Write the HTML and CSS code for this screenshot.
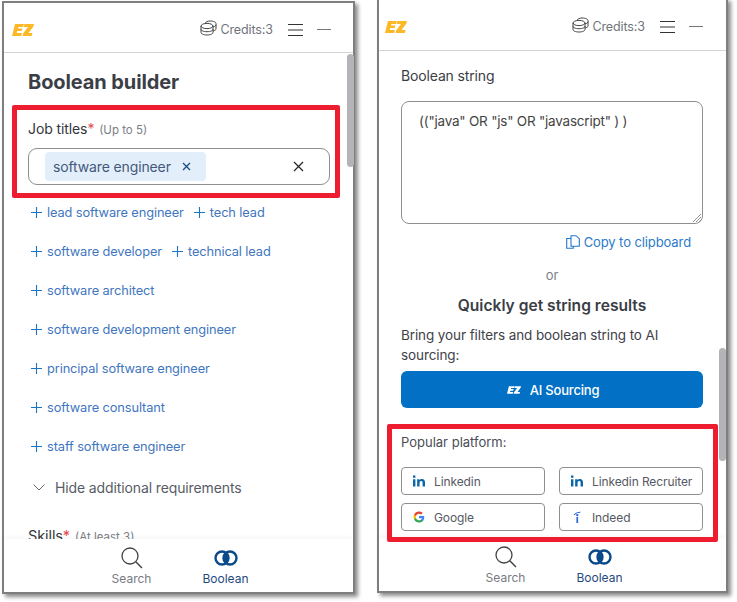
FILE: index.html
```html
<!DOCTYPE html>
<html lang="en">
<head>
<meta charset="utf-8">
<title>Boolean builder</title>
<link rel="stylesheet" href="styles.css">
</head>
<body>
<svg width="0" height="0" class="defs">
  <symbol id="coins" viewBox="0 0 17 16"><g fill="none" stroke="#444" stroke-width="1"><ellipse cx="7" cy="6" rx="6" ry="2.6"/><path d="M1 6v6.500C1 14 3.700 15 7 15s6-1 6-2.500V6M1 9.200C1 10.700 3.700 11.700 7 11.700s6-1 6-2.500"/><path d="M5 3.300C5.500 2 7.500 1 10 1c3.300 0 6 1 6 2.500V9c0 .8-1 1.500-3 2M13 6.800c2-.3 3-1.200 3-2"/></g></symbol>
  <symbol id="menu" viewBox="0 0 15 12"><path d="M0 .5h15M0 6h15M0 11.500h15" stroke="#333" stroke-width="1.100"/></symbol>
  <symbol id="plus" viewBox="0 0 11 11"><path d="M5.500 0v11M0 5.500h11" stroke="#1a75c4" stroke-width="1.100"/></symbol>
  <symbol id="lens" viewBox="0 0 22 22"><circle cx="9" cy="9" r="8" fill="none" stroke="#444" stroke-width="1.300"/><path d="M14.800 14.800L21 21" stroke="#444" stroke-width="1.500"/></symbol>
  <symbol id="venn" viewBox="0 0 24 16"><circle cx="8" cy="8" r="6.500" fill="none" stroke="#0b4a8a" stroke-width="2.400"/><circle cx="16" cy="8" r="6.500" fill="none" stroke="#0b4a8a" stroke-width="2.400"/><path d="M12 2.800a6.500 6.500 0 0 1 0 10.400a6.500 6.500 0 0 1 0-10.400z" fill="#0b4a8a"/></symbol>
  <symbol id="ez" viewBox="0 0 22 12"><path d="M3 0h9l-1 3H6.400L6 4.500h4.400l-.8 2.600H5.200L4.800 9H10l-1 3H0zM12.500 0H22l-.6 2.500L16.500 9H20.500l-.8 3H10.500l.6-2.500L16 3h-4.300z"/></symbol>
  <symbol id="in" viewBox="0 0 13 12"><path d="M0 4h2.600v8H0zM0 0h2.600v2.500H0zM4.500 4H7v1.200C7.500 4.400 8.500 3.800 9.700 3.800 12 3.800 13 5.200 13 7.500V12h-2.600V8c0-1.300-.4-2-1.500-2S7.100 6.800 7.100 8v4H4.500z" fill="#0a66a8"/></symbol>
</svg>

<section class="window window-left">
  <header class="topbar">
    <svg class="logo"><use href="#ez"/></svg>
    <div class="topbar-right">
      <svg class="coins"><use href="#coins"/></svg>
      <span class="credits">Credits:3</span>
      <svg class="menu"><use href="#menu"/></svg>
      <span class="minimize"></span>
    </div>
  </header>
  <main class="content content-left">
    <h1 class="title">Boolean builder</h1>
    <div class="field-label">Job titles<span class="req">*</span> <small>(Up to 5)</small></div>
    <div class="tag-input">
      <span class="tag">software engineer <svg class="tag-x" viewBox="0 0 9 9"><path d="M1 1l7 7M8 1l-7 7"/></svg></span>
      <svg class="clear-x" viewBox="0 0 11 11"><path d="M1 1l9 9M10 1l-9 9"/></svg>
    </div>
    <div class="suggest-list">
      <div class="suggest-row"><a class="sug"><svg class="plus"><use href="#plus"/></svg>lead software engineer</a><a class="sug"><svg class="plus"><use href="#plus"/></svg>tech lead</a></div>
      <div class="suggest-row"><a class="sug"><svg class="plus"><use href="#plus"/></svg>software developer</a><a class="sug"><svg class="plus"><use href="#plus"/></svg>technical lead</a></div>
      <div class="suggest-row"><a class="sug"><svg class="plus"><use href="#plus"/></svg>software architect</a></div>
      <div class="suggest-row"><a class="sug"><svg class="plus"><use href="#plus"/></svg>software development engineer</a></div>
      <div class="suggest-row"><a class="sug"><svg class="plus"><use href="#plus"/></svg>principal software engineer</a></div>
      <div class="suggest-row"><a class="sug"><svg class="plus"><use href="#plus"/></svg>software consultant</a></div>
      <div class="suggest-row"><a class="sug"><svg class="plus"><use href="#plus"/></svg>staff software engineer</a></div>
    </div>
    <div class="toggle"><svg class="chev" viewBox="0 0 12 7"><path d="M.5.500L6 6l5.500-5.500"/></svg>Hide additional requirements</div>
    <div class="field-label skills">Skills<span class="req">*</span> <small>(At least 3)</small></div>
  </main>
  <nav class="bottom">
    <div class="tab"><svg class="lens"><use href="#lens"/></svg><span>Search</span></div>
    <div class="tab active"><svg class="venn"><use href="#venn"/></svg><span>Boolean</span></div>
  </nav>
  <span class="scrollbar scrollbar-left"></span>
  <span class="red red-left"></span>
</section>

<section class="window window-right">
  <header class="topbar topbar-short">
    <svg class="logo"><use href="#ez"/></svg>
    <div class="topbar-right">
      <svg class="coins"><use href="#coins"/></svg>
      <span class="credits">Credits:3</span>
      <svg class="menu"><use href="#menu"/></svg>
      <span class="minimize"></span>
    </div>
  </header>
  <main class="content content-right">
    <div class="string-label">Boolean string</div>
    <div class="string-box">(("java" OR "js" OR "javascript" ) )
      <svg class="grip" viewBox="0 0 9 9"><path d="M1 9l8-8M4 9l5-5M7 9l2-2"/></svg>
    </div>
    <a class="copy"><svg class="copy-ico" viewBox="0 0 14 14"><path d="M4.500 3.500H.7v9.800h6.600v-2M5 .7h5l3.300 3v7.600H5z"/></svg>Copy to clipboard</a>
    <div class="or">or</div>
    <h2 class="quick">Quickly get string results</h2>
    <p class="bring">Bring your filters and boolean string to AI sourcing:</p>
    <button class="ai-btn"><svg class="ez-white"><use href="#ez"/></svg>AI Sourcing</button>
    <div class="popular">Popular platform:</div>
    <div class="platforms">
      <a class="plat"><svg class="plat-ico"><use href="#in"/></svg>Linkedin</a>
      <a class="plat"><svg class="plat-ico"><use href="#in"/></svg>Linkedin Recruiter</a>
      <a class="plat"><svg class="plat-ico g-ico" viewBox="0 0 48 48"><path fill="#4285F4" d="M45 24.500c0-1.600-.1-3.100-.4-4.500H24v8.500h11.800c-.5 2.800-2 5.100-4.400 6.700v5.500h7.100C42.700 36.800 45 31.200 45 24.500z"/><path fill="#34A853" d="M24 46c5.900 0 10.900-2 14.500-5.300l-7.100-5.500c-2 1.300-4.500 2.100-7.400 2.100-5.700 0-10.500-3.800-12.300-9H4.400v5.700C8 41.100 15.400 46 24 46z"/><path fill="#FBBC05" d="M11.700 28.300c-.9-2.700-.9-5.900 0-8.600V14H4.400c-3 6-3 14 0 20z"/><path fill="#EA4335" d="M24 10.800c3.200 0 6.100 1.100 8.400 3.300l6.300-6.300C34.900 4.200 29.900 2 24 2 15.400 2 8 6.900 4.400 14l7.300 5.700c1.800-5.200 6.600-8.900 12.300-8.900z"/></svg>Google</a>
      <a class="plat"><svg class="plat-ico" viewBox="0 0 13 14"><path d="M3 4.500C5 2.500 7.500 1.200 10.500 1.500" fill="none" stroke="#2a66e0" stroke-width="1.300"/><circle cx="6.800" cy="4.800" r="1.400" fill="#2a66e0"/><path d="M5.800 7h2v7h-2z" fill="#2a66e0"/></svg>Indeed</a>
    </div>
  </main>
  <nav class="bottom">
    <div class="tab"><svg class="lens"><use href="#lens"/></svg><span>Search</span></div>
    <div class="tab active"><svg class="venn"><use href="#venn"/></svg><span>Boolean</span></div>
  </nav>
  <span class="scrollbar scrollbar-right"></span>
  <span class="red red-right"></span>
</section>
</body>
</html>
```

FILE: styles.css
```css
* { box-sizing: border-box; }
html, body { margin: 0; height: 100%; }
body { position: relative; background: #fff; font-family: Inter, "Noto Sans", sans-serif; color: #3a3d45; overflow: hidden; }
.defs { position: absolute; }

.window { position: absolute; background: #fff; border: 2px solid #7f7f7f; display: flex; flex-direction: column; overflow: visible; box-shadow: 3px 3px 4px rgba(0,0,0,.45); }
.window-left { left: 2px; top: 1px; width: 353px; height: 593px; }
.window-right { left: 377px; top: -2px; width: 351px; height: 595px; }

.topbar { flex: none; height: 50px; display: flex; align-items: center; justify-content: space-between; border-bottom: 1px solid #d4d4d4; padding: 4px 22px 0 8px; }
.topbar-short { height: 51px; padding: 3px 23px 0 6px; }
.logo { width: 22px; height: 12px; fill: #fdb826; }
.topbar-right { display: flex; align-items: center; }
.coins { width: 17px; height: 16px; margin-right: 3px; margin-top: -3px; }
.credits { font-size: 12.500px; color: #70747b; letter-spacing: -.1px; margin-right: 15px; }
.menu { width: 15px; height: 12px; margin-right: 14px; }
.minimize { width: 14px; height: 1.500px; background: #777; }

.content { flex: 1; min-height: 0; overflow: hidden; }
.content-left { padding: 15px 24px 0 24px; }
.content-right { padding: 16px 24px 0 22px; }

.title { margin: 0; font-size: 20px; line-height: 28px; font-weight: 700; color: #3b3e46; letter-spacing: -.1px; }
.field-label { margin-top: 24px; font-size: 14px; line-height: 18px; color: #33363d; letter-spacing: -.1px; }
.req { color: #e5484d; }
.field-label small { font-size: 11.500px; color: #7a7e85; letter-spacing: 0; margin-left: 1px; }

.tag-input { margin-top: 9px; height: 37px; border: 1px solid #8f8f8f; border-radius: 9px; display: flex; align-items: center; justify-content: space-between; padding: 0 25px 0 16px; width: 302px; }
.tag { height: 29px; display: flex; align-items: center; background: #e3eefb; border-radius: 4px; padding: 0 15px 0 8px; font-size: 14px; color: #44597a; letter-spacing: -.13px; }
.tag-x { width: 9px; height: 9px; margin-left: 11px; fill: none; stroke: #1b4a80; stroke-width: 1.300; }
.clear-x { width: 11px; height: 11px; fill: none; stroke: #222; stroke-width: 1.200; }

.suggest-list { margin-top: 8px; margin-left: 3px; }
.suggest-row { height: 39px; display: flex; align-items: center; gap: 10px; }
.sug { display: flex; align-items: center; font-size: 12.800px; color: #3f76c0; letter-spacing: -.1px; white-space: nowrap; }
.plus { width: 11px; height: 11px; margin-right: 5px; flex: none; }

.toggle { margin-top: 11px; margin-left: 5px; display: flex; align-items: center; font-size: 14px; color: #585c66; letter-spacing: -.12px; height: 20px; }
.chev { width: 12px; height: 7px; margin-right: 10px; fill: none; stroke: #666; stroke-width: 1; }
.field-label.skills { margin-top: 30px; font-size: 14.500px; }

.bottom { flex: none; height: 53px; display: flex; justify-content: center; gap: 50px; padding-top: 8px; background: #fff; box-shadow: 0 -2px 4px rgba(0,0,0,.04); }
.tab { display: flex; flex-direction: column; align-items: center; width: 44px; font-size: 12px; color: #777b82; }
.tab span { margin-top: 2px; white-space: nowrap; }
.tab.active { color: #1f4a80; }
.lens { width: 22px; height: 22px; }
.venn { width: 24px; height: 16px; margin: 3px 0; }

.string-label { font-size: 14px; line-height: 18px; color: #3a3d45; letter-spacing: -.15px; }
.string-box { position: relative; margin-top: 16px; width: 302px; height: 123px; border: 1px solid #8f8f8f; border-radius: 8px; padding: 10px 17px; font-size: 13.500px; line-height: 18px; color: #444; letter-spacing: -.22px; }
.grip { position: absolute; right: 1px; bottom: 1px; width: 9px; height: 9px; fill: none; stroke: #777; stroke-width: .8; }
.copy { margin: 9px 12px 0 0; display: flex; align-items: center; justify-content: flex-end; width: 290px; font-size: 13px; line-height: 18px; color: #2b7bcb; letter-spacing: -.1px; }
.copy-ico { width: 14px; height: 14px; margin-right: 4px; fill: none; stroke: #2277cc; stroke-width: 1.100; }
.or { margin-top: 15px; text-align: center; width: 302px; font-size: 13px; line-height: 18px; color: #7c7f86; }
.quick { margin: 11px 0 0; width: 302px; text-align: center; font-size: 15.600px; line-height: 22px; font-weight: 600; color: #3a3d45; }
.bring { margin: 8px 0 0; width: 302px; font-size: 13.500px; line-height: 20px; color: #3f4249; letter-spacing: -.1px; }
.ai-btn { display: flex; align-items: center; justify-content: center; width: 302px; height: 37px; margin-top: 6px; border: 0; border-radius: 6px; background: #0270c5; color: #fff; font: 500 13px Inter, sans-serif; letter-spacing: -.2px; padding: 0 0 0 2px; }
.ez-white { width: 14px; height: 8px; fill: #fff; margin-right: 9px; }
.popular { margin-top: 25px; font-size: 13px; line-height: 18px; color: #4a4d55; }
.platforms { margin-top: 16px; display: grid; grid-template-columns: 144px 144px; column-gap: 14px; row-gap: 8px; }
.plat { height: 28px; border: 1px solid #8f8f8f; border-radius: 4px; display: flex; align-items: center; padding-left: 11px; font-size: 12px; color: #555962; white-space: nowrap; letter-spacing: -.1px; }
.plat-ico { width: 12px; height: 12px; margin-right: 9px; flex: none; }

.scrollbar { position: absolute; width: 7px; background: #b4b4b8; border-radius: 4px; }
.scrollbar-left { right: -1px; top: 51px; height: 113px; }
.scrollbar-right { right: 0; top: 348px; height: 113px; }

.red { position: absolute; border: 5px solid #ed1c2e; border-radius: 2px; pointer-events: none; }
.red-left { left: 8px; top: 102px; width: 328px; height: 93px; }
.red-right { left: 8px; top: 424px; width: 331px; height: 118px; }
```
